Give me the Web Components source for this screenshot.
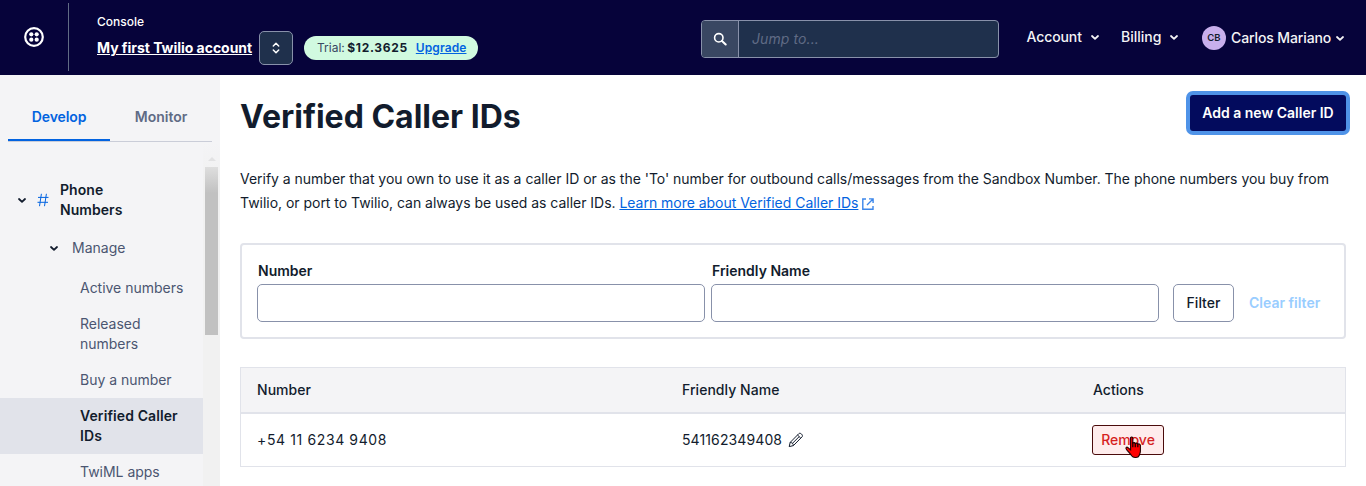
<!DOCTYPE html>
<html lang="en">
<head>
<meta charset="utf-8">
<title>Verified Caller IDs</title>
<style>
html,body{margin:0;height:100%;overflow:hidden}
body{font-family:Inter,"Liberation Sans",sans-serif;font-size:14px;line-height:20px;color:#121c2d;background:#fff}
</style>
</head>
<body>
<console-app></console-app>
<script>
function define(name, html) {
  const t = document.createElement('template');
  t.innerHTML = '<style>*{box-sizing:border-box}:host{box-sizing:border-box}</style>' + html;
  customElements.define(name, class extends HTMLElement {
    constructor() {
      super();
      this.attachShadow({mode: 'open'}).append(t.content.cloneNode(true));
    }
  });
}

define('icon-chevron', `<style>:host{display:block;width:8px;height:5px}svg{display:block}</style>
<svg width="8" height="5" viewBox="0 0 8 5"><path d="M1 1l3 2.8L7 1" fill="none" stroke="currentColor" stroke-width="1.8" stroke-linecap="round" stroke-linejoin="round"/></svg>`);

define('account-switcher', `<style>
:host{display:flex;padding:13px 0 0 28px;height:75px}
.name{width:162px}
.top{font-size:12px;line-height:18px;font-weight:500;color:#fff}
.acc{font-size:14px;line-height:20px;font-weight:700;color:#fff;text-decoration:underline;margin-top:7px;white-space:nowrap;letter-spacing:-.03px}
.sw{width:34px;height:34px;margin-top:18px;border:1px solid #8891aa;border-radius:5px;background:#1f304c;display:flex;align-items:center;justify-content:center}
.pill{height:24px;margin:23px 0 0 11px;width:174px;border-radius:12px;background:#d1fae0;display:flex;align-items:center;padding-left:13px;font-size:12px;color:#394762;white-space:nowrap}
b{color:#121c2d;font-weight:700;letter-spacing:.68px;margin-left:2.5px}
a{color:#0263e0;font-weight:600;text-decoration:underline;margin-left:8px;letter-spacing:.1px}
</style>
<div class="name"><div class="top">Console</div><div class="acc">My first Twilio account</div></div>
<div class="sw"><svg width="8" height="12" viewBox="0 0 8 12"><path d="M1.3 4L4 1.3 6.7 4M1.3 8L4 10.7 6.7 8" fill="none" stroke="#fff" stroke-width="1.5" stroke-linecap="round" stroke-linejoin="round"/></svg></div>
<div class="pill"><span>Trial:</span><b>$12.3625</b><a>Upgrade</a></div>`);

define('jump-search', `<style>
:host{display:flex;width:298px;height:38px;margin-top:20px;border:1px solid #8891aa;border-radius:4px;overflow:hidden;background:#1f304c}
.i{width:37px;border-right:1px solid #8891aa;background:#394762;display:flex;align-items:center;justify-content:center}
.t{padding-left:13px;line-height:36px;font-style:italic;color:#606b85;letter-spacing:.1px}
</style><div class="i"><svg width="14" height="14" viewBox="0 0 14 14"><circle cx="5.8" cy="5.8" r="4.2" fill="none" stroke="#fff" stroke-width="1.6"/><path d="M9 9l3.7 3.5" stroke="#fff" stroke-width="2" stroke-linecap="round"/></svg></div><div class="t">Jump to...</div>`);

define('nav-menu', `<style>:host{display:flex;align-items:center;height:20px;color:#f4f4f6;font-weight:500;white-space:nowrap}icon-chevron{margin-left:var(--gap,9px)}</style><slot></slot><icon-chevron></icon-chevron>`);

define('top-bar', `<style>
:host{display:flex;height:75px;background:#06033a}
.logo{width:69px;height:68px;margin-top:3px;border-right:1px solid #606b85;display:flex;align-items:center;justify-content:center}
.logo svg{display:block}
account-switcher{width:632px}
.m{display:flex;flex:1;padding-top:27px}
.av{width:24px;height:24px;border-radius:50%;background:#c8afec;color:#121c2d;font-size:9.5px;font-weight:600;line-height:24px;text-align:center;margin-right:5px;letter-spacing:.2px}
</style>
<div class="logo"><svg width="20" height="20" viewBox="0 0 20 20"><circle cx="10" cy="10" r="8.8" fill="none" stroke="#fff" stroke-width="2.2"/><g fill="#fff"><circle cx="7.3" cy="7.3" r="2.1"/><circle cx="12.7" cy="7.3" r="2.1"/><circle cx="7.3" cy="12.7" r="2.1"/><circle cx="12.7" cy="12.7" r="2.1"/></g></svg></div>
<account-switcher></account-switcher>
<jump-search></jump-search>
<div class="m"><nav-menu style="margin-left:27.5px;width:72.5px;letter-spacing:-.1px">Account</nav-menu><nav-menu style="margin-left:22px;width:58px">Billing</nav-menu><nav-menu style="margin:1px 0 0 23px;--gap:5px;letter-spacing:-.12px"><div class="av">CB</div>Carlos Mariano</nav-menu></div>`);

define('side-item', `<style>:host{display:block;padding:8px 18px 8px 80px;color:#4b5671;letter-spacing:-.02px}:host([active]){background:#e1e3ea;color:#121c2d;font-weight:600;letter-spacing:.1px}</style><slot></slot>`);

define('side-nav', `<style>
:host{display:block;width:220px;height:411px;background:#f4f4f6;overflow:hidden}
.tabs{display:flex;margin:0 8px;height:67px;border-bottom:1px solid #cacdd8;text-align:center;font-weight:600;color:#606b85}
.tabs div{width:102px;padding-top:32px;height:67px}
.tabs .on{color:#0263e0;border-bottom:2px solid #0263e0;height:66px;letter-spacing:-.1px}
.body{display:flex;height:344px}
.list{width:203px;padding-top:38px}
.h{display:flex;align-items:center;font-weight:600;height:40px;padding-left:18px;letter-spacing:.06px}
.h svg{margin:0 11px 0 11px}
.mg{display:flex;align-items:center;height:20px;margin:18px 0 12px;padding-left:50px}
.mg span{margin-left:14px;color:#4b5671}
.sb{width:17px;display:flex;flex-direction:column;align-items:center;background:linear-gradient(#f4f4f6,#f1f1f1 40px)}
.ar{border:4px solid transparent;border-top:0;border-bottom-color:#e2e2e3;margin-top:15px;height:4px}
.th{width:13px;height:168px;margin:6px 2px 0;background:linear-gradient(#dedede,#c1c1c1 26px)}
</style>
<div class="tabs"><div class="on">Develop</div><div>Monitor</div></div>
<div class="body"><div class="list">
<div class="h"><icon-chevron></icon-chevron><svg width="12" height="14" viewBox="0 0 12 14"><path d="M4.4.8L2.5 13.2M9.4.8L7.5 13.2M1 4.4h10.5M.5 9.3H11" fill="none" stroke="#0263e0" stroke-width="1"/></svg><div>Phone<br>Numbers</div></div>
<div class="mg"><icon-chevron></icon-chevron><span>Manage</span></div>
<side-item>Active numbers</side-item><side-item>Released<br>numbers</side-item><side-item>Buy a number</side-item><side-item active>Verified Caller IDs</side-item><side-item>TwiML apps</side-item>
</div><div class="sb"><div class="ar"></div><div class="th"></div></div></div>`);

define('text-field', `<style>:host{display:block;width:448px}label{display:block;font-weight:600;padding-left:1px;height:23px}input{display:block;width:100%;height:38px;border:1px solid #8891aa;border-radius:5px;background:#fff}</style><label><slot></slot></label><input>`);

define('ui-button', `<style>
:host{display:flex;align-items:center;justify-content:center;white-space:nowrap;border-radius:4px;font-weight:600}
:host([primary]){width:156px;height:36px;background:#030b5d;color:#fff;box-shadow:0 0 0 4px #4f93e8;border-radius:3px}
:host([outline]){width:61px;height:38px;border:1px solid #8891aa;border-radius:5px;font-weight:500}
:host([ghost]){color:#99cdff;height:38px}
:host([danger]){width:72px;height:30px;border:1px solid #4a0b0b;background:#feecec;color:#d61f1f;border-radius:3px;font-weight:500;position:relative}
</style><slot></slot>`);

define('filter-panel', `<style>:host{display:flex;align-items:flex-end;height:96px;border:2px solid #e1e3ea;border-radius:4px;padding:0 0 15px 15px;gap:6px}ui-button[outline]{margin-left:8px}ui-button[ghost]{margin-left:9px}</style>
<text-field>Number</text-field><text-field>Friendly Name</text-field><ui-button outline>Filter</ui-button><ui-button ghost>Clear filter</ui-button>`);

define('caller-table', `<style>
:host{display:block;height:100px;border:1px solid #e1e3ea;margin-top:28px}
.r{display:grid;grid-template-columns:425px 410px 1fr;padding-left:16px;align-items:center;height:52px}
.hd{height:46px;background:#f4f4f6;border-bottom:2px solid #e1e3ea;font-weight:500;letter-spacing:.04px}
.hd div:last-child{padding-left:1px}
.n{letter-spacing:.62px}.f{display:flex;align-items:center;letter-spacing:.11px}.f svg{margin-left:6px}
.cur{position:absolute;left:32px;top:10px}
</style>
<div class="r hd"><div>Number</div><div>Friendly Name</div><div>Actions</div></div>
<div class="r"><div class="n">+54 11 6234 9408</div><div class="f"><span>541162349408</span><svg width="16" height="16" viewBox="0 0 16 16"><path d="M1.2 14.6l1-4.2 8.7-8.8c1.4-1.3 4.6 1.6 3.2 3.2l-8.7 8.8zM2.2 10.4c1.8 0 3.2 1.3 3.2 3.2M9.5 3l3.3 3.2M4.3 11.5l6.8-6.8" fill="none" stroke="#121c2d" stroke-width="1" stroke-linejoin="round"/></svg></div>
<div><ui-button danger>Remove<svg class="cur" width="18" height="23" viewBox="0 0 18 23"><path d="M5.6 1.6q1.2-1.2 2.2.3V7q1.7-1 2.4.4 1.8-.8 2.5.7 2-.7 2.7 1.2V15c0 2-.8 2.7-1.2 4.5-.8 2.5-6 2.8-7.6.3C5.4 17.5 2 15 1 12.6c-.3-1.4 1-1.8 2-1l2.6 2.2z" fill="#f00" stroke="#220000" stroke-width="1.1"/><path d="M7.8 6v5.2M10.3 7v4.2M12.8 8v3.2" stroke="#220000" stroke-width="1.3"/></svg></ui-button></div></div>`);

define('caller-page', `<style>
:host{display:block;flex:1;padding:18px 20px 0 20px}
header{display:flex;justify-content:space-between;height:78px}
h1{margin:4px 0 0;font-size:32px;line-height:40px;font-weight:700;white-space:nowrap}
ui-button[primary]{margin:2px 0 0}
p{margin:-4px 0 0;height:52px;line-height:24px;white-space:nowrap;color:#121c2d;letter-spacing:-.019px}
.l2{letter-spacing:-.026px}
a{color:#0263e0;text-decoration:underline}
svg{vertical-align:-2px;margin-left:4px}
filter-panel{margin-top:24px}
</style>
<header><h1>Verified Caller IDs</h1><ui-button primary>Add a new Caller ID</ui-button></header>
<p><span class="l1">Verify a number that you own to use it as a caller ID or as the 'To' number for outbound calls/messages from the Sandbox Number. The phone numbers you buy from</span><br><span class="l2">Twilio, or port to Twilio, can always be used as caller IDs. <a>Learn more about Verified Caller IDs</a></span><svg width="12" height="12" viewBox="0 0 12 12"><path d="M4 1H.8v10.2H11V8M7 .9h4.1V5M11 1L5 7" fill="none" stroke="#3b86ea" stroke-width="1.4"/></svg></p>
<filter-panel></filter-panel><caller-table></caller-table>`);

define('console-app', `<style>:host{display:block;width:1366px;height:486px;overflow:hidden}.b{display:flex;height:411px}</style><top-bar></top-bar><div class="b"><side-nav></side-nav><caller-page></caller-page></div>`);
</script>
</body>
</html>
